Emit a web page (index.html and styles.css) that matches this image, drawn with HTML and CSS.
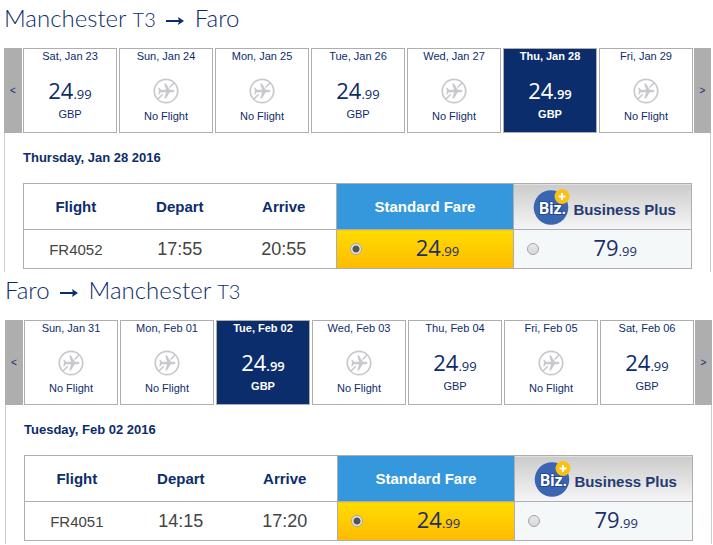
FILE: index.html
```html
<!DOCTYPE html>
<html lang="en">
<head>
    <meta charset="UTF-8">
    <meta name="viewport" content="width=device-width, initial-scale=1.0">
    <title>Select flights</title>
    <link rel="stylesheet" href="styles.css">
</head>
<body>
    <svg class="sprite" aria-hidden="true">
        <symbol id="arrow" viewBox="0 0 20 10">
            <path d="M1 5h15" fill="none" stroke="currentColor" stroke-width="2"/>
            <path d="M13 1L19 5l-6 4 1-4z" fill="currentColor"/>
        </symbol>
        <symbol id="no-flight" viewBox="0 0 26 26">
            <circle cx="13" cy="13" r="11.700" fill="none" stroke="currentColor" stroke-width="1.700"/>
            <path d="M4.700 21.300l5-5M16.500 9.500l4.800-4.800" stroke="currentColor" stroke-width="1.600"/>
            <path d="M21.500 13c0 .8-.9 1.300-2.200 1.300h-2.500l-3.900 6.200h-1.700l1.900-6.200H8l-1.600 2H5.200l.8-3.300-.8-3.300h1.200l1.600 2h5.100l-1.900-6.200h1.700l3.900 6.200h2.500c1.300 0 2.200.5 2.200 1.300z" fill="currentColor"/>
        </symbol>
        <symbol id="biz" viewBox="0 0 38 36">
            <circle cx="18" cy="18.500" r="17.300" fill="#3a66b1"/>
            <text class="biz-text" x="6" y="25">Biz.</text>
            <circle cx="29" cy="7.500" r="7.500" fill="#fcc010"/>
            <path d="M29 4v7M25.500 7.500h7" stroke="#fff" stroke-width="2"/>
        </symbol>
    </svg>

    <section class="trip outbound">
        <h2>Manchester <small>T3</small> <svg class="arrow" role="img" aria-label="to"><use href="#arrow"/></svg> Faro</h2>
        <div class="panel">
            <div class="dates">
                <button class="nav" type="button">&lt;</button>
                <div class="days">
                    <button class="day" type="button"><span>Sat, Jan 23</span><span class="price">24<small>.99</small></span><span>GBP</span></button>
                    <button class="day none" type="button"><span>Sun, Jan 24</span><svg class="plane"><use href="#no-flight"/></svg><span>No Flight</span></button>
                    <button class="day none" type="button"><span>Mon, Jan 25</span><svg class="plane"><use href="#no-flight"/></svg><span>No Flight</span></button>
                    <button class="day" type="button"><span>Tue, Jan 26</span><span class="price">24<small>.99</small></span><span>GBP</span></button>
                    <button class="day none" type="button"><span>Wed, Jan 27</span><svg class="plane"><use href="#no-flight"/></svg><span>No Flight</span></button>
                    <button class="day selected" type="button"><span>Thu, Jan 28</span><span class="price">24<small>.99</small></span><span>GBP</span></button>
                    <button class="day none" type="button"><span>Fri, Jan 29</span><svg class="plane"><use href="#no-flight"/></svg><span>No Flight</span></button>
                </div>
                <button class="nav next" type="button">&gt;</button>
            </div>
            <div class="details">
                <h3>Thursday, Jan 28 2016</h3>
                <table class="flights">
                    <thead>
                        <tr>
                            <th>Flight</th>
                            <th>Depart</th>
                            <th>Arrive</th>
                            <th class="standard">Standard Fare</th>
                            <th class="business"><div class="biz-head"><svg class="biz"><use href="#biz"/></svg><span>Business Plus</span></div></th>
                        </tr>
                    </thead>
                    <tbody>
                        <tr>
                            <td class="number">FR4052</td>
                            <td class="time">17:55</td>
                            <td class="time">20:55</td>
                            <td class="fare chosen"><label><input type="radio" name="outbound" checked><span class="price">24<small>.99</small></span></label></td>
                            <td class="fare"><label><input type="radio" name="outbound"><span class="price">79<small>.99</small></span></label></td>
                        </tr>
                    </tbody>
                </table>
            </div>
        </div>
    </section>

    <section class="trip inbound">
        <h2>Faro <svg class="arrow" role="img" aria-label="to"><use href="#arrow"/></svg> Manchester <small>T3</small></h2>
        <div class="panel">
            <div class="dates">
                <button class="nav" type="button">&lt;</button>
                <div class="days">
                    <button class="day none" type="button"><span>Sun, Jan 31</span><svg class="plane"><use href="#no-flight"/></svg><span>No Flight</span></button>
                    <button class="day none" type="button"><span>Mon, Feb 01</span><svg class="plane"><use href="#no-flight"/></svg><span>No Flight</span></button>
                    <button class="day selected" type="button"><span>Tue, Feb 02</span><span class="price">24<small>.99</small></span><span>GBP</span></button>
                    <button class="day none" type="button"><span>Wed, Feb 03</span><svg class="plane"><use href="#no-flight"/></svg><span>No Flight</span></button>
                    <button class="day" type="button"><span>Thu, Feb 04</span><span class="price">24<small>.99</small></span><span>GBP</span></button>
                    <button class="day none" type="button"><span>Fri, Feb 05</span><svg class="plane"><use href="#no-flight"/></svg><span>No Flight</span></button>
                    <button class="day" type="button"><span>Sat, Feb 06</span><span class="price">24<small>.99</small></span><span>GBP</span></button>
                </div>
                <button class="nav next" type="button">&gt;</button>
            </div>
            <div class="details">
                <h3>Tuesday, Feb 02 2016</h3>
                <table class="flights">
                    <thead>
                        <tr>
                            <th>Flight</th>
                            <th>Depart</th>
                            <th>Arrive</th>
                            <th class="standard">Standard Fare</th>
                            <th class="business"><div class="biz-head"><svg class="biz"><use href="#biz"/></svg><span>Business Plus</span></div></th>
                        </tr>
                    </thead>
                    <tbody>
                        <tr>
                            <td class="number">FR4051</td>
                            <td class="time">14:15</td>
                            <td class="time">17:20</td>
                            <td class="fare chosen"><label><input type="radio" name="inbound" checked><span class="price">24<small>.99</small></span></label></td>
                            <td class="fare"><label><input type="radio" name="inbound"><span class="price">79<small>.99</small></span></label></td>
                        </tr>
                    </tbody>
                </table>
            </div>
        </div>
    </section>
</body>
</html>
```
FILE: styles.css
```css
* {
    box-sizing: border-box;
}
body {
    margin: 0;
    padding: 0 1px 0 4px;
    background: #fff;
    color: #0c2d6b;
    font-family: "Liberation Sans", Arial, sans-serif;
}
.sprite {
    display: none;
}
.outbound {
    margin-right: 1px;
}
.inbound {
    margin-left: 1px;
}
h2 {
    margin: 0;
    height: 48px;
    padding-top: 1px;
    font-family: Lato, sans-serif;
    font-size: 24px;
    font-weight: 300;
    line-height: 34px;
}
h2 small {
    font-size: 20px;
}
.arrow {
    width: 20px;
    height: 10px;
    margin: 0 3px 1px;
}
.panel {
    border: solid #ccc;
    border-width: 0 1px;
}
.dates {
    display: flex;
    gap: 1px;
    height: 85px;
    margin: 0 -1px;
}
.nav {
    width: 18px;
    padding: 0;
    border: 0;
    background: #aeaeae;
    color: #0c2d6b;
    font: 10px "Liberation Sans", Arial, sans-serif;
}
.next {
    width: 17px;
}
.days {
    flex: 1;
    display: grid;
    grid-template-columns: repeat(7, 1fr);
    gap: 2px;
}
.day {
    display: flex;
    flex-direction: column;
    align-items: center;
    padding: 0;
    border: 1px solid #aeaeae;
    background: #fff;
    color: #0c2d6b;
    font: 11px/14px "Liberation Sans", Arial, sans-serif;
}
.day.selected {
    background: #0c2d6b;
    color: #fff;
    font-weight: bold;
}
.day .price {
    margin-top: 14px;
    line-height: 26px;
}
.price {
    font-family: "Open Sans", sans-serif;
    font-size: 22px;
    font-weight: 400;
    line-height: 28px;
}
.price small {
    font-size: 13px;
}
.selected .price {
    font-weight: 500;
}
.selected .price small {
    font-weight: 600;
}
.plane {
    width: 26px;
    height: 26px;
    margin: 15px 0 5px;
    color: #c8c9cf;
}
.details {
    padding: 17px 18px 3px;
}
h3 {
    margin: 0 0 17px;
    font-size: 13px;
    line-height: 16px;
}
.flights {
    width: 100%;
    table-layout: fixed;
    border-collapse: collapse;
    border: 1px solid #aeaeae;
    text-align: center;
}
.flights th,
.flights td {
    padding: 0;
}
.flights th {
    height: 46px;
    font-size: 15px;
}
.flights td {
    height: 39px;
    border-top: 1px solid #aeaeae;
    color: #444;
}
.flights .standard,
.flights .business {
    width: 26.6%;
    border-left: 1px solid #aeaeae;
}
.flights .standard {
    background: #3598dc;
    color: #fff;
}
.flights .business {
    background: linear-gradient(#cbcbcb, #f6f6f8);
    color: #243a73;
}
.biz-head {
    display: flex;
    justify-content: center;
    align-items: center;
    gap: 2px;
    padding-left: 4px;
}
.biz-head span {
    padding-top: 6px;
}
.biz {
    width: 38px;
    height: 36px;
}
.biz-text {
    fill: #fff;
    stroke: #24498f;
    stroke-width: 2px;
    paint-order: stroke;
    font: bold 16px Roboto, sans-serif;
}
.number {
    font-size: 15px;
}
.time {
    font-size: 18px;
}
.flights .fare {
    border-left: 1px solid #aeaeae;
    background: #f4f8f9;
    color: #1c2f68;
}
.flights .chosen {
    background: linear-gradient(#ffdc00, #ffba00);
}
.fare label {
    display: flex;
    align-items: center;
    padding-left: 13px;
}
.fare .price {
    flex: 1;
}
.fare input {
    appearance: none;
    width: 12px;
    height: 12px;
    margin: 0;
    border: 1px solid #a5a5a5;
    border-radius: 50%;
    background: linear-gradient(#e8e8e8, #d8d8d8);
}
.fare input:checked {
    background: radial-gradient(circle, #555 3px, #e8e8e8 4px);
}
```
